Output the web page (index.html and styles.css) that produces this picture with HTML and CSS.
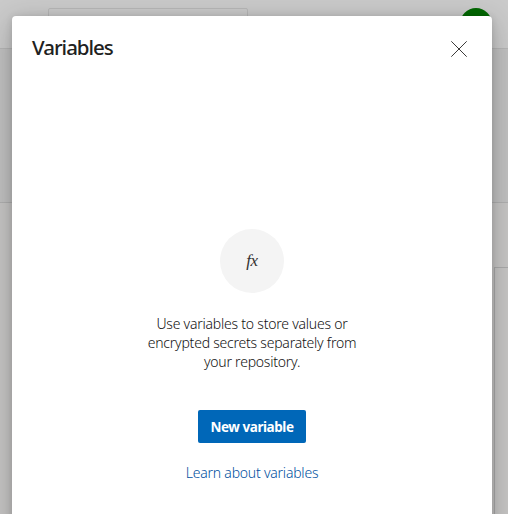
FILE: index.html
```
<!DOCTYPE html>
<html lang="en">
<head>
<meta charset="utf-8">
<title>Variables</title>
<link rel="stylesheet" href="styles.css">
</head>
<body>
<div class="page">
  <header class="topbar"><div class="search"></div><div class="avatar"></div></header>
  <div class="banner"></div>
  <div class="content"><div class="panel"></div></div>
</div>
<div class="overlay">
  <section class="dialog" role="dialog" aria-labelledby="title">
    <div class="dialog-header">
      <h1 id="title">Variables</h1>
      <button class="close" aria-label="Close"><svg width="16" height="16" viewBox="0 0 16 16"><path d="M.3.3l15.4 15.4M15.7.3L.3 15.7"/></svg></button>
    </div>
    <div class="empty">
      <div class="icon">fx</div>
      <p><span>Use variables to store values or</span><span>encrypted secrets separately from</span><span>your repository.</span></p>
      <button class="primary">New variable</button>
      <a class="learn">Learn about variables</a>
    </div>
  </section>
</div>
</body>
</html>
```
FILE: styles.css
```
* { box-sizing: border-box; }
body { margin: 0; height: 514px; overflow: hidden; font-family: "Noto Sans", "Open Sans", sans-serif; color: #323130; }
button { border: 0; padding: 0; font-family: inherit; }
.page { height: 514px; display: flex; flex-direction: column; background: #cacaca; }
.topbar { height: 49px; flex: none; padding: 8px 16px 0 48px; display: flex; justify-content: space-between; border-bottom: 1px solid #b5b5b5; }
.search { width: 200px; height: 32px; border: 1px solid #b8b8b8; border-radius: 2px; }
.avatar { width: 32px; height: 32px; border-radius: 50%; background: #006800; }
.banner { height: 154px; flex: none; background: #c0c0c0; border-bottom: 1px solid #afafaf; }
.content { flex: 1; padding: 64px 0 0 494px; background: #c6c5c4; }
.panel { height: 100%; border: solid #aaa; border-width: 1px 0 0 1px; }
.overlay { position: absolute; inset: 0; padding: 16px 16px 0 12px; overflow: hidden; }
.dialog { height: 530px; border-radius: 4px; background: #fff; box-shadow: 0 6px 28px rgba(0,0,0,.24), 0 1px 7px rgba(0,0,0,.13); }
.dialog-header { height: 65px; padding: 0 25px 0 20px; display: flex; align-items: center; justify-content: space-between; }
h1 { margin: 0; padding-bottom: 4px; font-size: 20.5px; line-height: 28px; font-weight: 500; letter-spacing: -1px; color: #212121; }
.close { width: 16px; height: 16px; background: none; display: flex; }
.close path { stroke: #3b3a39; stroke-width: 1; fill: none; }
.empty { padding-top: 148px; display: flex; flex-direction: column; align-items: center; }
.icon { width: 64px; height: 64px; border-radius: 50%; background: #f4f4f4; display: flex; align-items: center; justify-content: center; font: italic 17px "Liberation Serif", serif; letter-spacing: -.3px; }
p { margin: 21px 0 0; display: flex; flex-direction: column; align-items: center; font-size: 14px; font-weight: 350; line-height: 19px; letter-spacing: -.22px; color: #111; }
.primary { margin-top: 39px; width: 108px; height: 33px; border-radius: 2px; background: #0067b8; color: #fff; font-size: 13.5px; font-weight: 700; letter-spacing: -.45px; }
.learn { margin-top: 20px; font-size: 14px; font-weight: 350; line-height: 20px; color: #0050a0; letter-spacing: -.22px; }
```
